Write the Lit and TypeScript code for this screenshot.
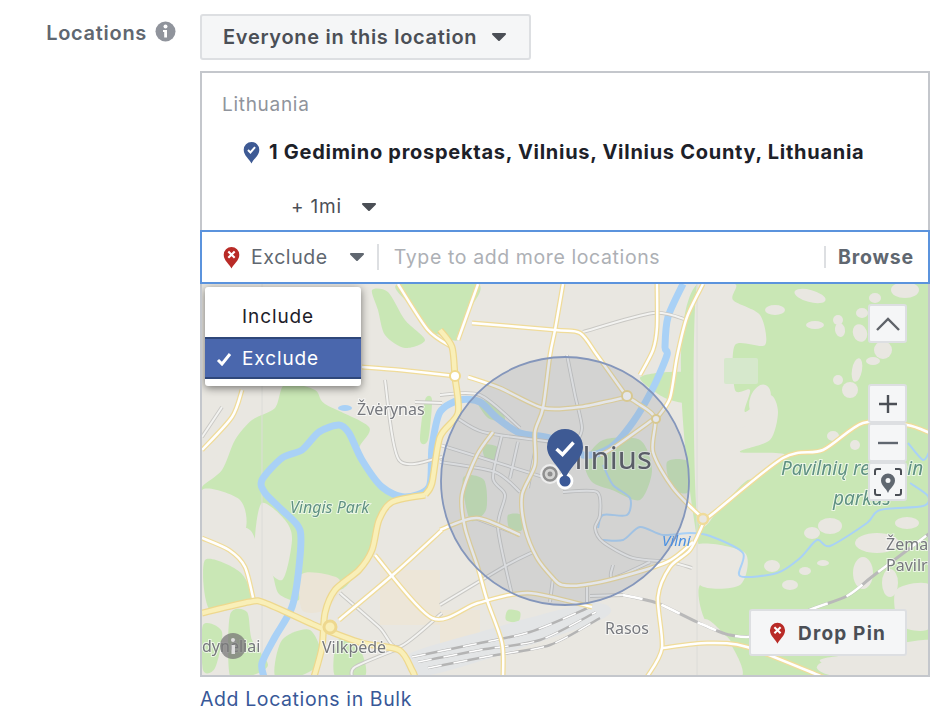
import { LitElement, html, svg, css } from "lit";
import { customElement } from "lit/decorators.js";

const pin = (color: string, mark: "check" | "x", w: number, h: number) => html`
  <svg width=${w} height=${h} viewBox="0 0 24 32">
    <path fill=${color} d="M12 31.5C9.6 25.5 1 20.5 1 12a11 11 0 0 1 22 0c0 8.500-8.600 13.500-11 19.500z" />
    ${mark === "check"
      ? svg`<path d="M7 12.500l3.500 3.500L17 8.500" fill="none" stroke="#fff" stroke-width="2.800" />`
      : svg`<path d="M7.500 7.500l9 9M16.500 7.500l-9 9" fill="none" stroke="#fff" stroke-width="3" />`}
  </svg>
`;

const caret = (color: string, w = 16, h = 10) => html`
  <svg width=${w} height=${h} viewBox="0 0 16 10">
    <path fill=${color} stroke=${color} stroke-width="2" stroke-linejoin="round" d="M2 2h12L8 8z" />
  </svg>
`;

// turns "x y x y ..." into a smooth curve, closed for area shapes
const smooth = (points: string, closed = false) => {
  const n = points.trim().split(/\s+/).map(Number);
  const p: number[][] = [];
  for (let i = 0; i < n.length; i += 2) p.push([n[i], n[i + 1]]);
  const at = (i: number) => (closed ? p[(i + p.length) % p.length] : p[Math.max(0, Math.min(p.length - 1, i))]);
  let d = `M${p[0][0]} ${p[0][1]}`;
  const count = closed ? p.length : p.length - 1;
  for (let i = 0; i < count; i++) {
    const [a, b, c, e] = [at(i - 1), at(i), at(i + 1), at(i + 2)];
    const k = 0.14;
    d += `C${b[0] + (c[0] - a[0]) * k} ${b[1] + (c[1] - a[1]) * k} ${c[0] - (e[0] - b[0]) * k} ${c[1] - (e[1] - b[1]) * k} ${c[0]} ${c[1]}`;
  }
  return closed ? d + "z" : d;
};

// all map data is in page coordinates, see viewBox on the svg
const green = [
  "398 284 478 284 466 315 458 340 440 335 428 330 410 305",
  "372 290 388 292 405 320 425 340 405 348 385 335 378 310",
  "285 384 315 390 325 404 369 427 359 450 375 480 402 497 424 492 392 504 379 520 372 553 359 570 339 590 302 574 299 600 279 594 272 573 259 550 250 530 225 520 205 500 202 487 222 470 235 440 252 420 275 408",
  "205 560 240 572 250 600 210 610",
  "230 615 247 612 252 640 268 665 250 676 230 676",
  "203 625 222 632 215 668 203 670",
  "282 640 310 630 322 660 300 676 275 676",
  "338 640 360 650 365 676 335 676",
  "697 284 930 284 930 660 860 655 820 660 835 676 742 676 730 640 705 620 700 585 735 583 745 555 697 538",
  "585 462 603 440 640 440 652 470 640 500 612 490 592 482",
  "640 378 668 372 693 375 693 402 665 398",
  "667 462 688 462 688 492 672 488",
  "477 400 497 405 505 420 488 418",
  "463 478 484 480 486 510 470 520",
  "483 445 497 447 495 460 485 458",
  "508 515 522 515 522 530 510 530",
  "425 400 432 400 428 440 420 440",
  "508 610 520 612 518 622 506 620",
];

const beige = [
  "697 284 735 284 733 300 760 315 765 345 735 345 735 390 750 390 745 412 770 395 778 412 770 440 740 452 785 455 745 482 722 505 697 515",
  "262 503 285 520 292 540 282 580 259 560 255 537",
  "202 490 240 500 245 530 215 545 202 535",
  "202 430 222 415 232 440 205 462",
  "697 545 745 553 740 585 700 585",
  "703 620 728 640 742 676 697 676",
  "823 662 930 640 930 676 835 676",
  "896 590 930 585 930 628 900 625",
];

const spots = [
  [810, 296, 16, 6, 15], [815, 325, 9, 4, 0], [838, 320, 5, 5, 0], [840, 330, 5, 7, -10], [860, 333, 7, 9, -20],
  [883, 350, 9, 9, 0], [857, 370, 5, 12, 10], [850, 390, 8, 8, 0], [838, 380, 5, 5, 0], [875, 298, 6, 5, 0],
  [862, 313, 6, 5, 0], [873, 361, 7, 4, 0], [812, 533, 8, 6, 0], [830, 526, 12, 8, 0], [772, 566, 8, 6, 0],
  [805, 571, 6, 4, 0], [823, 563, 6, 3, 0], [863, 573, 10, 16, 0], [890, 583, 8, 14, 0], [877, 543, 22, 10, 0],
  [907, 523, 12, 6, 0], [833, 436, 6, 5, 0], [855, 445, 5, 5, 0], [760, 400, 10, 16, 20], [735, 420, 18, 8, 0],
  [775, 310, 10, 5, 0], [745, 470, 18, 10, 0], [790, 585, 8, 5, 0], [905, 290, 14, 8, 0],
];

const water = [
  "264 677 262 663 275 637 292 607 299 567 300 530 282 510 265 493 262 480 282 458 302 450 319 432 339 425 349 433 362 460 382 487 405 497 429 487 432 447 440 412 460 400 480 402 497 418 520 433 550 438 583 455 610 448 633 422 653 388 667 355 665 347 668 317 683 284",
];

const streams = [
  "603 465 613 485 630 498 627 515 603 515 598 528",
  "603 540 623 540 640 527 663 535 690 533 710 536 743 553 740 576 777 573 800 558 817 540 830 546 867 523 880 510 923 506 928 496 910 483",
  "908 443 923 460 930 450",
];

const yellow = [
  "398 284 428 330 452 347",
  "478 284 458 340",
  "362 367 400 370 455 376",
  "468 377 500 388 543 408 580 407 627 397",
  "472 323 555 330 580 333 597 355 627 397",
  "563 284 555 330 550 355 543 408 535 432 535 465 522 495 525 528 537 558 553 578 562 585 583 585 617 578 667 562 693 542",
  "657 284 657 327 653 350 640 375",
  "703 284 687 317 677 357 670 398 657 418",
  "627 397 637 403 655 418 653 452 673 488 703 518 710 516 783 458 823 450 863 423 907 425 930 433",
  "655 418 613 448 600 455",
  "703 524 690 550 670 567 658 597 662 648 647 677",
  "662 648 707 643 747 647 823 677",
  "493 432 477 455 462 495 465 528 478 568 487 600 502 643 503 677",
  "440 530 477 518 520 535",
  "339 620 395 573 442 530",
  "375 555 432 618 478 603 528 593 592 607",
  "202 450 232 417 242 390",
  "202 538 229 550 245 567 254 602",
];

const wide = [
  "440 330 452 347 455 377 458 413 440 437 432 483 425 495",
  "425 495 392 502 379 520 372 550 359 570 335 590 325 613 322 647 314 677",
  "202 613 249 602 265 603 319 627 362 643 399 650 412 670 415 677",
];

const city = [
  "440 445 495 462 543 477",
  "440 462 495 472 520 492",
  "457 418 483 432 537 440 582 445",
  "502 435 493 478 505 495 498 528 512 595",
  "518 442 510 478",
  "535 452 528 488",
  "440 395 480 395 520 428",
  "440 605 507 565 533 552",
  "563 492 597 492 600 515 595 528 603 542 633 558 670 562 692 568",
  "567 355 575 395 582 428 575 445",
  "613 565 613 578 650 562",
  "553 578 550 602",
  "587 585 587 602",
  "385 380 399 460 442 457",
  "415 402 442 403",
  "340 593 379 627 399 647 442 613",
  "520 535 475 518",
  "202 437 222 407",
  "583 332 653 313 687 320",
  "352 677 355 667 395 650",
  "623 595 590 596",
];

const yard = [
  "412 657 470 645 530 632 590 607",
  "418 662 480 650 540 640 596 612",
  "428 668 490 656 550 645 600 618",
];

@customElement("map-view")
class MapView extends LitElement {
  static styles = css`
    :host {
      display: block;
      position: relative;
      height: 391px;
      overflow: hidden;
    }
    svg.map {
      display: block;
      filter: blur(0.5px);
    }
    .label {
      font-family: "Noto Sans", sans-serif;
      fill: #76787d;
      font-size: 16px;
      paint-order: stroke;
      stroke: rgba(255, 255, 255, 0.65);
      stroke-width: 2px;
    }
    .park {
      font-style: italic;
      fill: #5f9183;
    }
    .big {
      font-size: 19px;
    }
    .city {
      font-size: 31px;
      fill: #4e5058;
    }
    .river {
      font-family: "Noto Sans", sans-serif;
      font-size: 15px;
      font-style: italic;
      fill: #4a90e2;
    }
    .ctrl {
      position: absolute;
      box-sizing: border-box;
      right: 21px;
      width: 39px;
      height: 39px;
      display: flex;
      align-items: center;
      justify-content: center;
      background: #f5f6f7;
      border: 2px solid #dddfe2;
      border-radius: 3px;
    }
    .collapse {
      top: 20px;
    }
    .zoom {
      position: absolute;
      top: 100px;
      right: 21px;
      width: 39px;
      display: flex;
      flex-direction: column;
    }
    .zoom .ctrl {
      position: static;
    }
    .drop {
      position: absolute;
      right: 21px;
      bottom: 19px;
      box-sizing: border-box;
      width: 158px;
      height: 47px;
      display: flex;
      align-items: center;
      gap: 12px;
      padding: 2px 0 0 18px;
      background: #f5f6f7;
      border: 2px solid #dddfe2;
      border-radius: 3px;
      font: 700 19px "Inter", sans-serif;
      letter-spacing: 1.2px;
      color: #4b4f56;
    }
    .drop svg {
      margin-top: -2px;
    }
    .menu {
      position: absolute;
      left: 3px;
      top: 3px;
      width: 156px;
      height: 99px;
      background: #fff;
      border-radius: 3px;
      box-shadow: 0 2px 8px rgba(0, 0, 0, 0.5);
      font: 400 19px "Inter", sans-serif;
      letter-spacing: 0.9px;
      color: #1d2129;
      padding-top: 8px;
      box-sizing: border-box;
    }
    .item {
      height: 42px;
      box-sizing: border-box;
      display: flex;
      align-items: center;
      padding-left: 37px;
      position: relative;
    }
    .item.on {
      background: #4a67ad;
      border-top: 2px solid #2f477a;
      border-bottom: 2px solid #2f477a;
      color: #fff;
    }
    .item svg {
      position: absolute;
      left: 11px;
      top: 13px;
    }
  `;

  render() {
    return html`
      <svg class="map" width="728" height="391" viewBox="202 284 728 391">
        <rect x="195" y="280" width="740" height="400" fill="#e9e7e1" />
        <rect x="380" y="570" width="60" height="55" fill="#ede6d8" />
        <rect x="440" y="610" width="40" height="50" fill="#ede6d8" />
        ${green.map((d) => svg`<path d=${smooth(d, true)} fill="#c9e7b5" />`)}
        ${beige.map((d) => svg`<path d=${smooth(d, true)} fill="#e9e7e1" />`)}
        ${spots.map(([x, y, rx, ry, r]) => svg`<ellipse cx=${x} cy=${y} rx=${rx} ry=${ry} transform="rotate(${r} ${x} ${y})" fill="#e9e7e1" />`)}
        <path d=${smooth("302 574 336 577 340 590 325 610 302 610", true)} fill="#ebe4d6" />
        <rect x="724" y="358" width="34" height="26" rx="2" fill="#d6e8cc" />
        <ellipse cx="345" cy="408" rx="7" ry="3" fill="#a9d1f6" />
        <path d="M262 284V675M697 284V675" stroke="#dcdcd8" stroke-width="1" />
        ${water.map((d) => svg`<path d=${smooth(d)} fill="none" stroke="#a9d1f6" stroke-width="7" stroke-linejoin="round" />`)}
        ${streams.map((d) => svg`<path d=${smooth(d)} fill="none" stroke="#a9d1f6" stroke-width="2" stroke-linejoin="round" />`)}
        <path d=${smooth("408 655 480 632 590 603 600 620 430 675", true)} fill="#e3e5e6" />
        ${yard.map((d) => svg`<path d=${smooth(d)} fill="none" stroke="#b4b4b4" stroke-width="2.500" />`)}
        ${yard.map((d) => svg`<path d=${smooth(d)} fill="none" stroke="#fff" stroke-width="1.500" stroke-dasharray="14 12" />`)}
        <path d=${smooth("623 595 657 603 697 622 730 635 760 635 807 611 847 596 873 576 930 533")} fill="none" stroke="#b9b9b9" stroke-width="3" />
        <path d=${smooth("623 595 657 603 697 622 730 635 760 635 807 611 847 596 873 576 930 533")} fill="none" stroke="#fff" stroke-width="2.500" stroke-dasharray="20 20" />
        ${city.map((d) => svg`<path d=${smooth(d)} fill="none" stroke="#c9c8c4" stroke-width="3.800" />`)}
        ${city.map((d) => svg`<path d=${smooth(d)} fill="none" stroke="#f3f3f1" stroke-width="2" />`)}
        ${yellow.map((d) => svg`<path d=${smooth(d)} fill="none" stroke="#f0dc9a" stroke-width="5" />`)}
        ${yellow.map((d) => svg`<path d=${smooth(d)} fill="none" stroke="#fff" stroke-width="2.500" />`)}
        ${wide.map((d) => svg`<path d=${smooth(d)} fill="none" stroke="#eed88e" stroke-width="7" />`)}
        ${wide.map((d) => svg`<path d=${smooth(d)} fill="none" stroke="#f9efb8" stroke-width="4.500" />`)}
        <circle cx="455" cy="376" r="5" fill="#fff" stroke="#f0d98c" stroke-width="2" />
        <circle cx="627" cy="396" r="5" fill="#fff" stroke="#f0d98c" stroke-width="2" />
        <circle cx="656" cy="419" r="4" fill="#fff" stroke="#f0d98c" stroke-width="2" />
        <circle cx="330" cy="627" r="6" fill="#f9efb8" stroke="#eed88e" stroke-width="3" />
        <circle cx="703" cy="519" r="5" fill="#e9e7e1" stroke="#f0dc9a" stroke-width="2.500" />
        <text class="label" x="357" y="415">Žvėrynas</text>
        <text class="label park" x="290" y="513">Vingis Park</text>
        <text class="label park big" x="781" y="475">Pavilnių regionin</text>
        <text class="label park big" x="833" y="505">parkas</text>
        <text class="label" x="886" y="550">Žema</text>
        <text class="label" x="886" y="571">Pavilr</text>
        <text class="label" x="605" y="634">Rasos</text>
        <text class="label" x="322" y="653">Vilkpėdė</text>
        <text class="label" x="202" y="652">dynėliai</text>
        <text class="label city" x="556" y="469">Vilnius</text>
        <circle cx="565" cy="481" r="124" fill="rgba(130,140,160,0.22)" stroke="#8496bb" stroke-width="1.800" />
        <text class="river" x="662" y="546">Vilni</text>
        <circle cx="233" cy="646" r="13" fill="rgba(120,120,120,0.75)" />
        <rect x="231.500" y="645" width="3.500" height="9" fill="#ddd" />
        <circle cx="233" cy="640" r="2" fill="#ddd" />
        <circle cx="550" cy="474" r="8" fill="none" stroke="rgba(255,255,255,0.6)" stroke-width="4" />
        <circle cx="550" cy="474" r="6.500" fill="none" stroke="#8f8f8f" stroke-width="2.500" />
        <circle cx="550" cy="474" r="2.500" fill="#8f8f8f" />
        <circle cx="565" cy="481" r="7" fill="#3b5998" stroke="#fff" stroke-width="2.800" />
        <path fill="#3e5a94" d="M565 480C561 467 547 459 547 447a18 18 0 0 1 36 0C583 459 569 467 565 480z" />
        <path d="M556.500 449l6 5.500 11-12" fill="none" stroke="#fff" stroke-width="3.500" />
      </svg>

      <div class="menu">
        <div class="item">Include</div>
        <div class="item on">
          <svg width="16" height="14" viewBox="0 0 16 14"><path d="M2 8l4 4 8-10" fill="none" stroke="#fff" stroke-width="3" /></svg>
          Exclude
        </div>
      </div>

      <div class="ctrl collapse">
        <svg width="26" height="16" viewBox="0 0 26 16"><path d="M2 14L13 3l11 11" fill="none" stroke="#5f6369" stroke-width="2.400" /></svg>
      </div>
      <div class="zoom">
        <div class="ctrl">
          <svg width="22" height="22" viewBox="0 0 22 22"><path d="M11 2v18M2 11h18" stroke="#4b4f56" stroke-width="2.400" /></svg>
        </div>
        <div class="ctrl">
          <svg width="22" height="22" viewBox="0 0 22 22"><path d="M1 11h20" stroke="#606770" stroke-width="2.400" /></svg>
        </div>
        <div class="ctrl">
          <svg width="30" height="30" viewBox="0 0 30 30">
            <path d="M2 8V4a2 2 0 0 1 2-2h4M22 2h4a2 2 0 0 1 2 2v4M28 22v4a2 2 0 0 1-2 2h-4M8 28H4a2 2 0 0 1-2-2v-4" fill="none" stroke="#4b4f56" stroke-width="2" />
            <path fill="#606770" fill-rule="evenodd" d="M15 26c-1.500-4.500-7-7.500-7-12.500a7 7 0 0 1 14 0c0 5-5.500 8-7 12.500zm0-10a2.500 2.500 0 1 0 0-5 2.500 2.500 0 0 0 0 5z" />
          </svg>
        </div>
      </div>
      <div class="drop">${pin("#b92b27", "x", 17, 22)}Drop Pin</div>
    `;
  }
}

@customElement("app-root")
export class AppRoot extends LitElement {
  static styles = css`
    :host {
      display: block;
      background: #fff;
      height: 718px;
      overflow: hidden;
      font-family: "Inter", "Liberation Sans", sans-serif;
    }
    .row {
      display: grid;
      grid-template-columns: 200px 730px;
      padding-top: 14px;
    }
    .label {
      display: flex;
      justify-content: flex-end;
      align-items: center;
      gap: 8px;
      height: 38px;
      padding-right: 24px;
      font-size: 20px;
      font-weight: 600;
      letter-spacing: 0.7px;
      color: #606770;
    }
    .label svg {
      margin-bottom: 4px;
    }
    .audience {
      box-sizing: border-box;
      display: inline-flex;
      align-items: center;
      gap: 14px;
      height: 46px;
      width: 331px;
      padding-left: 21px;
      background: #f5f6f7;
      border: 2px solid #dddfe2;
      border-radius: 3px;
      font-size: 20px;
      font-weight: 600;
      letter-spacing: 0.7px;
      color: #4b4f56;
    }
    .box {
      box-sizing: border-box;
      margin-top: 11px;
      border: 2px solid #c4c7cc;
    }
    .chosen {
      height: 157px;
      box-sizing: border-box;
      padding: 20px 20px 0;
    }
    .country {
      font-size: 19px;
      line-height: 24px;
      letter-spacing: 0.7px;
      color: #90949c;
    }
    .place {
      display: flex;
      align-items: center;
      gap: 9px;
      margin: 21px 0 0 21px;
      height: 28px;
      font-size: 20px;
      font-weight: 700;
      letter-spacing: 0.72px;
      color: #1d2129;
    }
    .radius {
      display: flex;
      align-items: center;
      gap: 19px;
      margin: 29px 0 0 69px;
      font-size: 19px;
      line-height: 24px;
      letter-spacing: 0.8px;
      color: #4b4f56;
    }
    .entry {
      box-sizing: border-box;
      height: 54px;
      margin: 0 -2px;
      display: flex;
      align-items: center;
      padding: 0 14px 0 21px;
      border: 2px solid #5b93dd;
      font-size: 19.500px;
      letter-spacing: 0.6px;
    }
    .mode {
      display: flex;
      align-items: center;
      color: #606770;
    }
    .mode span {
      margin: 0 21px 0 11px;
    }
    .sep {
      width: 2px;
      height: 26px;
      background: #dddfe2;
      margin: 0 15px 0 12px;
    }
    .hint {
      flex: 1;
      color: #adb0b5;
    }
    .browse {
      font-weight: 700;
      letter-spacing: 0.8px;
      color: #606770;
      padding-left: 12px;
      border-left: 2px solid #dddfe2;
      line-height: 22px;
    }
    .bulk {
      display: block;
      margin-top: 10px;
      font-size: 19.500px;
      line-height: 24px;
      letter-spacing: 0.6px;
      color: #385898;
      text-decoration: none;
    }
  `;

  render() {
    return html`
      <div class="row">
        <div class="label">
          Locations
          <svg width="21" height="21" viewBox="0 0 21 21">
            <circle cx="10.500" cy="10.500" r="10" fill="#90949c" />
            <circle cx="10.500" cy="5.500" r="2" fill="#fff" />
            <path d="M8 9h4v7.500H9.200V11H8z" fill="#fff" />
          </svg>
        </div>
        <div>
          <div class="audience">Everyone in this location ${caret("#4b4f56")}</div>
          <div class="box">
            <div class="chosen">
              <div class="country">Lithuania</div>
              <div class="place">
                ${pin("#3e5a94", "check", 17, 23)}
                1 Gedimino prospektas, Vilnius, Vilnius County, Lithuania
              </div>
              <div class="radius">+ 1mi ${caret("#4b4f56")}</div>
            </div>
            <div class="entry">
              <div class="mode">
                ${pin("#b92b27", "x", 17, 23)}
                <span>Exclude</span>
                ${caret("#606770")}
              </div>
              <div class="sep"></div>
              <div class="hint">Type to add more locations</div>
              <div class="browse">Browse</div>
            </div>
            <map-view></map-view>
          </div>
          <a class="bulk" href="#">Add Locations in Bulk</a>
        </div>
      </div>
    `;
  }
}
